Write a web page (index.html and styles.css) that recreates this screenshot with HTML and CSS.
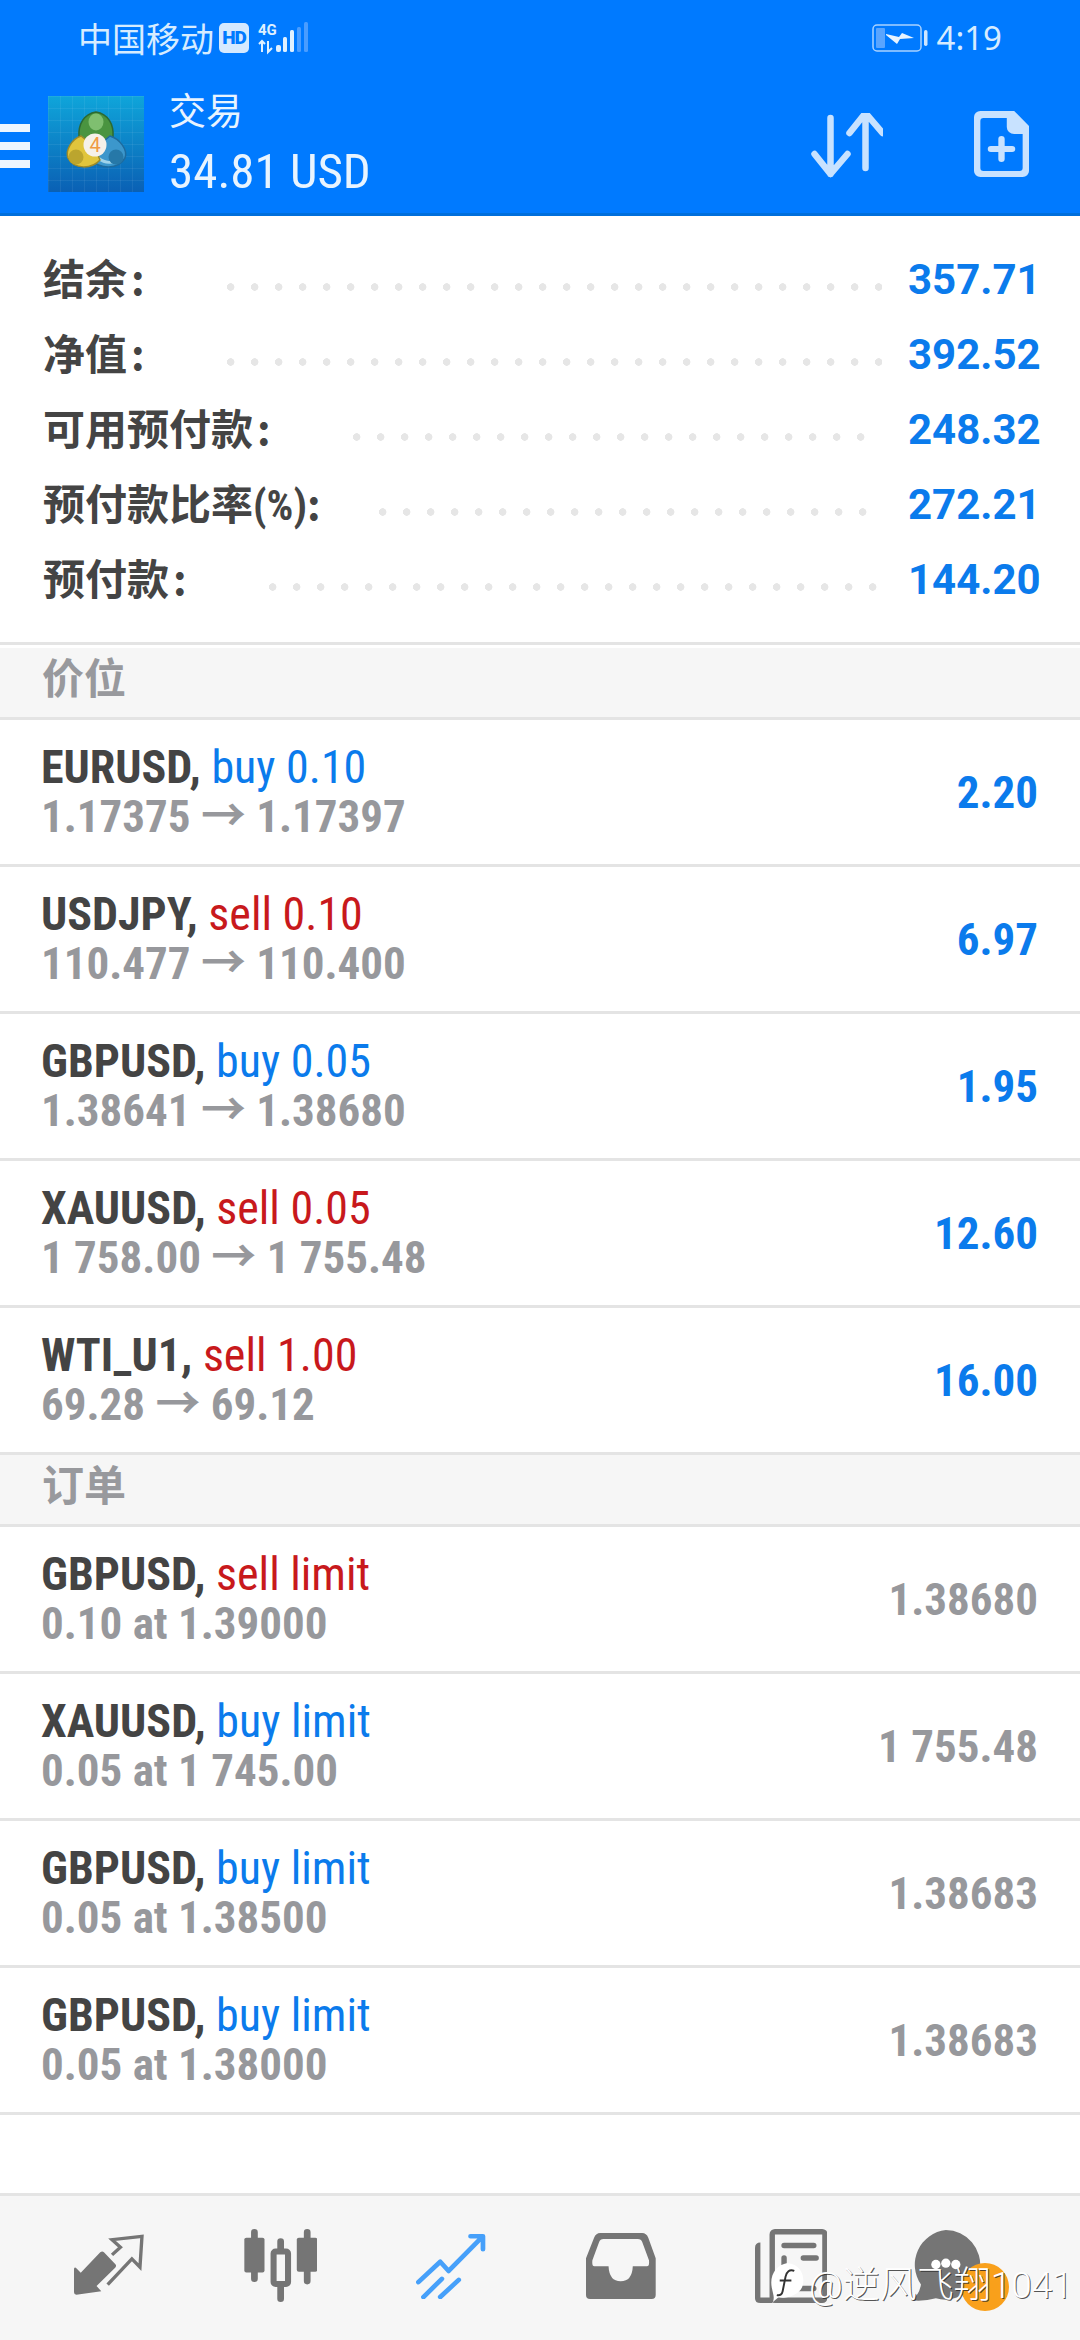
FILE: index.html
```html
<!DOCTYPE html>
<html lang="zh">
<head>
    <meta charset="UTF-8">
    <title>交易</title>
    <link rel="stylesheet" href="styles.css">
</head>
<body>
    <div id="phone">
        <div id="header">
            <div class="status-bar">
                <div class="status-left">
                    <span class="carrier">中国移动</span>
                    <span class="hd-badge">HD</span>
                    <svg class="signal" width="60" height="34" viewBox="0 0 60 34">
                        <text x="0" y="14" class="net-type">4G</text>
                        <path d="M4 20v11M1 23l3-3 3 3M10 20v11l4-4" class="net-arrows"/>
                        <rect x="18" y="24" width="5" height="7" rx="2" fill="#dff0ff"/>
                        <rect x="25" y="16" width="4" height="15" rx="1.5" fill="#dff0ff"/>
                        <rect x="32" y="9" width="4" height="22" rx="1.5" fill="#dff0ff"/>
                        <rect x="39" y="6" width="4" height="25" rx="1.5" fill="#4a9dff"/>
                        <rect x="46" y="1" width="4" height="30" rx="1.5" fill="#4a9dff"/>
                    </svg>
                </div>
                <div class="status-right">
                    <svg width="56" height="28" viewBox="0 0 56 28">
                        <rect x="1" y="1" width="48" height="26" rx="4" fill="none" stroke="#a9d2ff" stroke-width="1.5"/>
                        <rect x="4" y="4" width="9" height="20" rx="1" fill="#5aa5ff"/>
                        <path d="M14 10l13 3 3-4 12 5-14 1-3 5-11-9z" fill="#e8f4ff"/>
                        <rect x="52" y="6" width="3.5" height="16" rx="1.7" fill="#cfe6ff"/>
                    </svg>
                    <span class="clock">4:19</span>
                </div>
            </div>
            <div class="app-bar">
                <div class="menu-btn"><span></span><span></span><span></span></div>
                <svg class="logo" width="96" height="96" viewBox="0 0 96 96">
                    <defs>
                        <linearGradient id="logoBg" x1="0" y1="0" x2="0" y2="1">
                            <stop offset="0" stop-color="#0fa5da"/>
                            <stop offset="1" stop-color="#0a60b4"/>
                        </linearGradient>
                        <pattern id="logoGrid" width="12" height="12" patternUnits="userSpaceOnUse">
                            <path d="M12 0H0V12" fill="none" stroke="#ffffff" stroke-opacity=".12"/>
                        </pattern>
                    </defs>
                    <rect width="96" height="96" fill="url(#logoBg)"/>
                    <rect width="96" height="96" fill="url(#logoGrid)"/>
                    <path d="M48 16C36 18 30 28 31 41L48 52 65 41C66 28 60 18 48 16z" fill="#4a9440" stroke="#2c6a33" stroke-width="1.5"/>
                    <ellipse cx="48" cy="26" rx="7.5" ry="8.5" fill="#7fbf70"/>
                    <path d="M62 40C72 43 80 54 77 62 70 74 52 73 43 64L50 50z" fill="#3c97cc" stroke="#1e6b9e" stroke-width="1.5"/>
                    <path d="M50 62C58 68 66 68 72 60" fill="none" stroke="#9fd3ea" stroke-width="3"/>
                    <circle cx="68" cy="61" r="7.5" fill="#2678a8"/>
                    <path d="M33 40C24 43 17 54 20 62 26 74 44 73 52 64L46 50z" fill="#e0c53c" stroke="#9c8a28" stroke-width="1.5"/>
                    <circle cx="28" cy="61" r="7.5" fill="#bba52e"/>
                    <circle cx="47" cy="49" r="11.5" fill="#f5f1e9"/>
                    <text x="47" y="56" class="logo-four">4</text>
                </svg>
                <div class="app-title">
                    <div class="title-top">交易</div>
                    <div class="title-balance">34.81 USD</div>
                </div>
                <svg class="sort-icon" width="73" height="66" viewBox="0 0 72 66">
                    <path d="M20 5v56M4 41l16 20 17-20M55 0v55M39 20L55 0l17 20" fill="none" stroke="#c8e2ff" stroke-width="6.5" stroke-linecap="round" stroke-linejoin="round"/>
                </svg>
                <svg class="new-icon" width="55" height="66" viewBox="0 0 52 66" preserveAspectRatio="none">
                    <path d="M6 0h32l14 15v45a6 6 0 0 1-6 6H6a6 6 0 0 1-6-6V6a6 6 0 0 1 6-6zM9 7a3 3 0 0 0-3 3v47a3 3 0 0 0 3 3h34a3 3 0 0 0 3-3V23H38a7 7 0 0 1-7-7V7z" fill="#c8e2ff" fill-rule="evenodd"/>
                    <path d="M26 28v20M16 38h20" stroke="#c8e2ff" stroke-width="6" stroke-linecap="round"/>
                </svg>
            </div>
        </div>

        <div id="summary">
            <div class="sum-row"><span class="sum-label">结余<span class="colon">:</span></span><span class="leader"></span><span class="sum-value">357.71</span></div>
            <div class="sum-row"><span class="sum-label">净值<span class="colon">:</span></span><span class="leader"></span><span class="sum-value">392.52</span></div>
            <div class="sum-row"><span class="sum-label">可用预付款<span class="colon">:</span></span><span class="leader leader-short"></span><span class="sum-value">248.32</span></div>
            <div class="sum-row"><span class="sum-label">预付款比率<span class="percent">(%)</span>:</span><span class="leader leader-tight"></span><span class="sum-value">272.21</span></div>
            <div class="sum-row"><span class="sum-label">预付款<span class="colon">:</span></span><span class="leader"></span><span class="sum-value">144.20</span></div>
        </div>

        <div class="section-head first">价位</div>
        <div class="row">
            <div><div class="line"><b>EURUSD,</b> <span class="buy">buy 0.10</span></div><div class="line gray">1.17375 → 1.17397</div></div>
            <div class="profit">2.20</div>
        </div>
        <div class="row">
            <div><div class="line"><b>USDJPY,</b> <span class="sell">sell 0.10</span></div><div class="line gray">110.477 → 110.400</div></div>
            <div class="profit">6.97</div>
        </div>
        <div class="row">
            <div><div class="line"><b>GBPUSD,</b> <span class="buy">buy 0.05</span></div><div class="line gray">1.38641 → 1.38680</div></div>
            <div class="profit">1.95</div>
        </div>
        <div class="row">
            <div><div class="line"><b>XAUUSD,</b> <span class="sell">sell 0.05</span></div><div class="line gray">1 758.00 → 1 755.48</div></div>
            <div class="profit">12.60</div>
        </div>
        <div class="row">
            <div><div class="line"><b>WTI_U1,</b> <span class="sell">sell 1.00</span></div><div class="line gray">69.28 → 69.12</div></div>
            <div class="profit">16.00</div>
        </div>

        <div class="section-head">订单</div>
        <div class="row">
            <div><div class="line"><b>GBPUSD,</b> <span class="sell">sell limit</span></div><div class="line gray">0.10 at 1.39000</div></div>
            <div class="price">1.38680</div>
        </div>
        <div class="row">
            <div><div class="line"><b>XAUUSD,</b> <span class="buy">buy limit</span></div><div class="line gray">0.05 at 1 745.00</div></div>
            <div class="price">1 755.48</div>
        </div>
        <div class="row">
            <div><div class="line"><b>GBPUSD,</b> <span class="buy">buy limit</span></div><div class="line gray">0.05 at 1.38500</div></div>
            <div class="price">1.38683</div>
        </div>
        <div class="row">
            <div><div class="line"><b>GBPUSD,</b> <span class="buy">buy limit</span></div><div class="line gray">0.05 at 1.38000</div></div>
            <div class="price">1.38683</div>
        </div>

        <div id="tabbar">
            <svg class="tab" width="72" height="63" viewBox="215 165 210 190" preserveAspectRatio="none">
                <path d="M215 270q2-6 7-2l13 14 58-62q6-4 11 0l34 36q4 5 0 10l-56 56 14 16-74 10q-7 0-7-7z" fill="#757575"/>
                <path d="M328 228l25-23-25-23 89-10-6 93-24-25-72 78" fill="none" stroke="#757575" stroke-width="10"/>
            </svg>
            <svg class="tab" width="75" height="73" viewBox="708 148 219 220" preserveAspectRatio="none">
                <path d="M739 158v140M817 186v172M896 158v147" stroke="#757575" stroke-width="20" stroke-linecap="round"/>
                <rect x="709" y="174" width="60" height="105" rx="6" fill="#757575"/>
                <rect x="865" y="174" width="61" height="103" rx="6" fill="#757575"/>
                <rect x="796" y="216" width="43" height="98" rx="6" fill="#f6f6f6" stroke="#757575" stroke-width="18"/>
            </svg>
            <svg class="tab" width="72" height="66" viewBox="1213 153 210 200" preserveAspectRatio="none">
                <path d="M1220 302l65-62 25 28 100-103M1375 163h37v39M1235 347l55-55M1285 347l55-52" fill="none" stroke="#46a0fa" stroke-width="14" stroke-linecap="round" stroke-linejoin="round"/>
            </svg>
            <svg class="tab" width="71" height="66" viewBox="148 155 207 198" preserveAspectRatio="none">
                <path d="M190 155h125q12 0 18 14l22 62v110q0 12-12 12H160q-12 0-12-12V231l24-62q6-14 18-14zM200 173q-10 0-13 9l-20 55q-2 18 6 18h42q2 45 36 45t36-45h42q8 0 6-18l-20-55q-3-9-13-9z" fill="#757575" fill-rule="evenodd"/>
            </svg>
            <svg class="tab" width="74" height="74" viewBox="647 148 215 214" preserveAspectRatio="none">
                <rect x="698" y="156" width="156" height="198" rx="8" fill="none" stroke="#757575" stroke-width="16"/>
                <path d="M663 195q-8 0-8 8v145q0 6 8 6h35" fill="none" stroke="#757575" stroke-width="16"/>
                <path d="M733 196h88M790 232h38M733 232v70M733 320h88" stroke="#757575" stroke-width="16" stroke-linecap="round"/>
            </svg>
            <svg class="tab tab-chat" width="71" height="71" viewBox="1108 148 210 214" preserveAspectRatio="none">
                <path d="M1213 148a105 105 0 1 1-30 206q-35 10-75 6 25-15 30-48a105 105 0 0 1 75-164z" fill="#757575"/>
                <circle cx="1183" cy="252" r="14" fill="#fff"/>
                <circle cx="1213" cy="248" r="14" fill="#fff"/>
                <circle cx="1243" cy="252" r="14" fill="#fff"/>
            </svg>
            <span class="tab-badge"></span>
        </div>

        <div class="watermark">
            <svg width="35" height="41" viewBox="0 0 36 42">
                <path d="M18 1C32 2 37 16 33 26 29 35 15 38 9 36L3 41C5 36 3 33 2 27-1 14 6 3 18 1z" fill="#fff"/>
                <path d="M25 9c-5-2-8 1-9 6l-3 15q-1 5-6 4M10 19h12" fill="none" stroke="#333" stroke-width="2"/>
            </svg>
            <span>@逆风飞翔1041</span>
        </div>
    </div>
</body>
</html>
```

FILE: styles.css
```css
/* General */
body {
    margin: 0;
    background-color: #fff;
    font-family: "Roboto Condensed", "Liberation Sans Narrow", Roboto, "Noto Sans CJK SC", sans-serif;
}
#phone {
    position: relative;
    width: 1080px;
    height: 2340px;
    overflow: hidden;
}

/* Blue header */
#header {
    height: 213px;
    background-color: #007aff;
    border-bottom: 3px solid #006fdc;
    color: #e8f4ff;
}
.status-bar {
    height: 75px;
    display: flex;
    justify-content: space-between;
    align-items: center;
    padding: 0 78px;
}
.status-left, .status-right {
    display: flex;
    align-items: center;
}
.carrier {
    font-family: "Noto Sans CJK SC", sans-serif;
    font-size: 34px;
    color: #d6ecff;
}
.hd-badge {
    margin-left: 5px;
    width: 30px;
    height: 30px;
    border-radius: 5px;
    background-color: #d5e9ff;
    color: #007aff;
    font-family: Roboto, sans-serif;
    font-size: 19px;
    font-weight: 900;
    line-height: 30px;
    text-align: center;
    letter-spacing: -1px;
}
.signal {
    margin-left: 9px;
}
.net-type {
    font-family: Roboto, sans-serif;
    font-size: 15px;
    font-weight: 700;
    fill: #dff0ff;
}
.net-arrows {
    fill: none;
    stroke: #dff0ff;
    stroke-width: 2;
}
.clock {
    margin-left: 9px;
    font-family: "Noto Sans", sans-serif;
    font-size: 33px;
    color: #d6ecff;
}
.app-bar {
    height: 138px;
    display: flex;
    align-items: flex-start;
}
.menu-btn {
    width: 30px;
    margin-top: 49px;
    display: flex;
    flex-direction: column;
    gap: 10px;
}
.menu-btn span {
    height: 8px;
    background-color: #eef6ff;
}
.logo {
    margin: 21px 0 0 18px;
}
.logo-four {
    font-family: Roboto, sans-serif;
    font-size: 20px;
    fill: #ef9a45;
    text-anchor: middle;
}
.app-title {
    margin: 6px 0 0 25px;
    flex: 1;
}
.title-top {
    font-family: "Noto Sans CJK SC", sans-serif;
    font-size: 37px;
    line-height: 56px;
}
.title-balance {
    margin-top: 5px;
    font-size: 49px;
    line-height: 60px;
}
.sort-icon {
    margin: 38px 0 0 0;
}
.new-icon {
    margin: 36px 51px 0 91px;
}

/* Account summary */
#summary {
    padding: 26px 42px 25px 43px;
    border-bottom: 3px solid #e4e4e4;
}
.sum-row {
    height: 75px;
    display: flex;
    align-items: center;
}
.sum-label {
    margin-bottom: 6px;
    font-family: "Noto Sans CJK SC", sans-serif;
    font-size: 42px;
    font-weight: 700;
    color: #444;
}
.colon {
    margin-left: 4px;
}
.percent {
    font-family: "Roboto Condensed", Roboto, sans-serif;
}
.leader {
    flex: 1;
    height: 8px;
    margin: 14px 26px 0 82px;
    background-image: radial-gradient(circle at 3.7px 4px, #e6e6e6 3.5px, transparent 4px);
    background-size: 24px 8px;
    background-repeat: repeat-x;
}
.leader-short {
    margin-right: 38px;
}
.leader-tight {
    margin-left: 58px;
}
.sum-value {
    width: 130px;
    text-align: right;
    font-family: Roboto, sans-serif;
    font-size: 42px;
    font-weight: 700;
    color: #0b7bec;
}

/* Section titles and rows */
.section-head {
    height: 69px;
    padding-left: 42px;
    background-color: #f6f6f6;
    border-bottom: 3px solid #e4e4e4;
    font-family: "Noto Sans CJK SC", sans-serif;
    font-size: 42px;
    font-weight: 700;
    line-height: 56px;
    color: #98999d;
}
.section-head.first {
    margin-top: 3px;
}
.row {
    height: 144px;
    padding: 0 42px 0 41px;
    display: flex;
    justify-content: space-between;
    align-items: center;
    border-bottom: 3px solid #e4e4e4;
}
.line {
    font-size: 46px;
    line-height: 50px;
    color: #444;
}
.line b {
    font-weight: 700;
}
.gray {
    font-size: 45px;
    font-weight: 700;
    color: #97989c;
}
.buy {
    color: #0b7bec;
}
.sell {
    color: #c8191c;
}
.profit {
    font-size: 45px;
    font-weight: 700;
    color: #0b7bec;
}
.price {
    font-size: 45px;
    font-weight: 700;
    color: #97989c;
}

/* Bottom tabs */
#tabbar {
    position: absolute;
    left: 0;
    right: 0;
    top: 2193px;
    height: 139px;
    padding: 0 0 5px 74px;
    display: flex;
    align-items: center;
    background-color: #f6f6f6;
    border-top: 3px solid #e4e4e4;
}
.tab {
    margin-right: 99px;
}
.tab-chat {
    margin-left: -15px;
}
.tab-badge {
    position: absolute;
    left: 961px;
    top: 67px;
    width: 48px;
    height: 48px;
    border-radius: 50%;
    background-color: #f9a01b;
}
.watermark {
    position: absolute;
    left: 770px;
    top: 2255px;
    display: flex;
    align-items: center;
    gap: 4px;
    font-family: Roboto, "Noto Sans CJK SC", sans-serif;
    font-size: 37px;
    font-weight: 300;
    color: #fff;
    text-shadow: 1px 1px 0 rgba(40, 40, 40, .8);
}
```
